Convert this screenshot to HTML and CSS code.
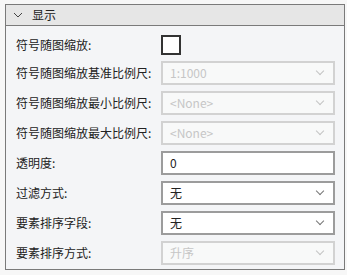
FILE: index.html
```html
<!DOCTYPE html>
<html>
<head>
  <meta charset="UTF-8">
  <title>显示</title>
  <link rel="stylesheet" href="styles.css">
</head>
<body>

<div class="panel">
  <!-- Group header -->
  <div class="panel-header">
    <svg class="caret" width="10" height="8" viewBox="0 0 10 8">
      <polyline points="1,2 5,6 9,2" fill="none" stroke="#444" stroke-width="1"/>
    </svg>
    <span>显示</span>
  </div>

  <div class="panel-body">
    <div class="row row-check">
      <label>符号随图缩放:</label>
      <div class="checkbox"></div>
    </div>

    <div class="row">
      <label>符号随图缩放基准比例尺:</label>
      <div class="select disabled"><span>1:1000</span><i class="arrow"></i></div>
    </div>

    <div class="row">
      <label>符号随图缩放最小比例尺:</label>
      <div class="select disabled"><span>&lt;None&gt;</span><i class="arrow"></i></div>
    </div>

    <div class="row">
      <label>符号随图缩放最大比例尺:</label>
      <div class="select disabled"><span>&lt;None&gt;</span><i class="arrow"></i></div>
    </div>

    <div class="row">
      <label>透明度:</label>
      <div class="input"><span>0</span></div>
    </div>

    <div class="row">
      <label>过滤方式:</label>
      <div class="select"><span>无</span><i class="arrow"></i></div>
    </div>

    <div class="row">
      <label>要素排序字段:</label>
      <div class="select"><span>无</span><i class="arrow"></i></div>
    </div>

    <div class="row">
      <label>要素排序方式:</label>
      <div class="select disabled"><span>升序</span><i class="arrow"></i></div>
    </div>
  </div>
</div>

</body>
</html>
```

FILE: styles.css
```css
* {
  box-sizing: border-box;
}
body {
  margin: 0;
  padding: 4px 0 0 5px;
  background: #f7f7f7;
  font-family: "Noto Sans CJK SC", "Noto Sans", sans-serif;
  font-size: 12px;
  color: #222;
}
.panel {
  width: 340px;
  height: 266px;
  border: 1px solid #7a7a7a;
  background: #f4f5f7;
}
.panel-header {
  height: 21px;
  display: flex;
  align-items: center;
  gap: 9px;
  padding-left: 7px;
  background: #e6e6e6;
  border-bottom: 1px solid #7a7a7a;
  line-height: 1;
}
.caret {
  display: block;
}
.panel-body {
  padding: 9px 9px 0 10px;
  display: flex;
  flex-direction: column;
  gap: 6px;
}
.row {
  display: grid;
  grid-template-columns: 145px 174px;
  align-items: center;
  height: 24px;
}
.row-check {
  height: 20px;
}
.row label {
  line-height: 1;
  white-space: nowrap;
}
.checkbox {
  width: 20px;
  height: 20px;
  border: 2px solid #333;
  background: #fff;
}
.select, .input {
  height: 24px;
  display: flex;
  align-items: center;
  justify-content: space-between;
  padding: 0 10px 0 7px;
  border: 2px solid #9c9c9c;
  background: #fff;
  line-height: 1;
}
.select.disabled {
  border-color: #d2d2d2;
  background: #f8f9f9;
  color: #c6c6c6;
}
.arrow {
  width: 6px;
  height: 6px;
  border-right: 1px solid #777;
  border-bottom: 1px solid #777;
  transform: rotate(45deg);
  margin-top: -4px;
}
.disabled .arrow {
  border-color: #c4c4c4;
}
```
